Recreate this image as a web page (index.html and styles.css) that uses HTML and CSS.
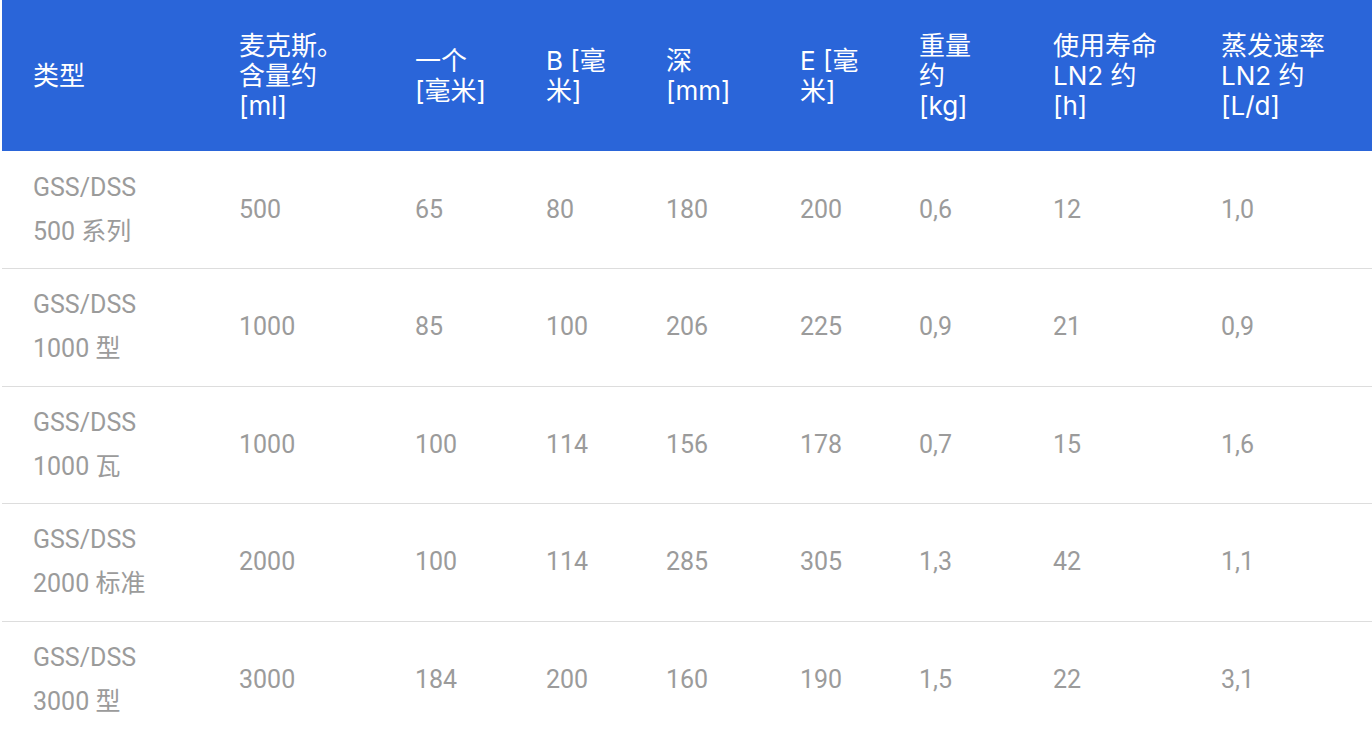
FILE: index.html
```html
<!DOCTYPE html>
<html lang="zh">
<head>
<meta charset="utf-8">
<title>规格表</title>
<link rel="stylesheet" href="styles.css">
</head>
<body>
<div class="wrap">
<table class="spec">
<colgroup>
<col class="c1"><col class="c2"><col class="c3"><col class="c4"><col class="c5"><col class="c6"><col class="c7"><col class="c8"><col class="c9">
</colgroup>
<thead>
<tr>
<th>类型</th>
<th>麦克斯。<br>含量约<br>[ml]</th>
<th>一个<br>[毫米]</th>
<th>B [毫<br>米]</th>
<th>深<br>[mm]</th>
<th>E [毫<br>米]</th>
<th>重量<br>约<br>[kg]</th>
<th>使用寿命<br>LN2 约<br>[h]</th>
<th>蒸发速率<br>LN2 约<br>[L/d]</th>
</tr>
</thead>
<tbody>
<tr><td>GSS/DSS<br>500 系列</td><td>500</td><td>65</td><td>80</td><td>180</td><td>200</td><td>0,6</td><td>12</td><td>1,0</td></tr>
<tr><td>GSS/DSS<br>1000 型</td><td>1000</td><td>85</td><td>100</td><td>206</td><td>225</td><td>0,9</td><td>21</td><td>0,9</td></tr>
<tr><td>GSS/DSS<br>1000 瓦</td><td>1000</td><td>100</td><td>114</td><td>156</td><td>178</td><td>0,7</td><td>15</td><td>1,6</td></tr>
<tr><td>GSS/DSS<br>2000 标准</td><td>2000</td><td>100</td><td>114</td><td>285</td><td>305</td><td>1,3</td><td>42</td><td>1,1</td></tr>
<tr><td>GSS/DSS<br>3000 型</td><td>3000</td><td>184</td><td>200</td><td>160</td><td>190</td><td>1,5</td><td>22</td><td>3,1</td></tr>
</tbody>
</table>
</div>
</body>
</html>
```

FILE: styles.css
```css
html, body {
  margin: 0;
  padding: 0;
  background: #ffffff;
}

.wrap {
  padding-left: 2px;
}

.spec {
  width: 1370px;
  border-collapse: collapse;
  table-layout: fixed;
}

.c1 { width: 206px; }
.c2 { width: 176px; }
.c3 { width: 131px; }
.c4 { width: 120px; }
.c5 { width: 134px; }
.c6 { width: 119px; }
.c7 { width: 134px; }
.c8 { width: 168px; }
.c9 { width: 182px; }

.spec th {
  background: #2a65d9;
  color: #ffffff;
  font-family: "Inter", "Noto Sans CJK SC", sans-serif;
  font-weight: 400;
  font-size: 26px;
  line-height: 30px;
  text-align: left;
  vertical-align: middle;
  padding: 0 4px 0 31px;
  height: 151px;
  box-sizing: border-box;
  white-space: nowrap;
}

.spec td {
  font-family: "Roboto", "Noto Sans CJK SC", sans-serif;
  font-size: 25px;
  line-height: 44px;
  color: #9b9b9b;
  text-align: left;
  vertical-align: middle;
  padding: 0 10px 0 31px;
  height: 117.5px;
  box-sizing: border-box;
  border-bottom: 1px solid #dddddd;
}
```
